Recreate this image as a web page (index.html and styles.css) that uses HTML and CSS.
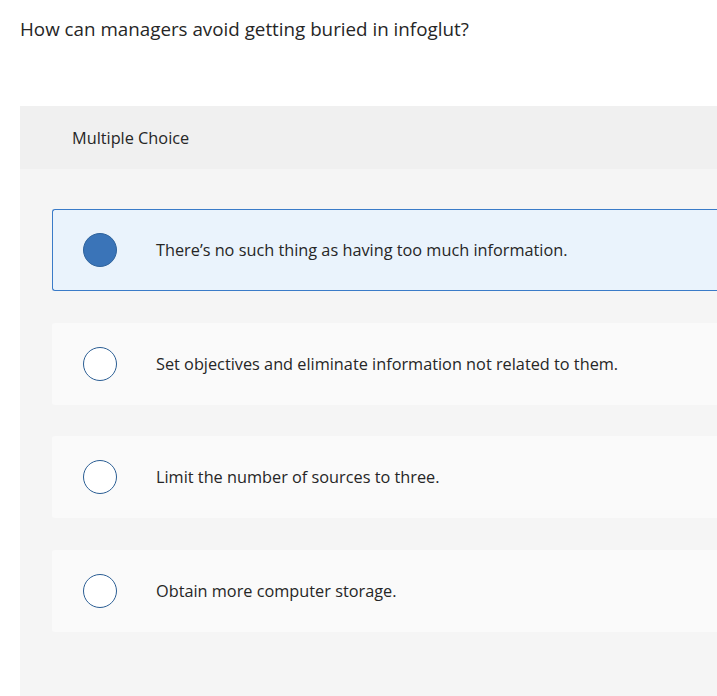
FILE: index.html
```html
<!DOCTYPE html>
<html lang="en">
<head>
    <meta charset="UTF-8">
    <meta name="viewport" content="width=device-width, initial-scale=1.0">
    <title>Multiple Choice</title>
    <link rel="stylesheet" href="styles.css">
</head>
<body>

    <h1 class="question">How can managers avoid getting buried in infoglut?</h1>

    <div class="panel">
        <div class="panel-header">Multiple Choice</div>
        <div class="panel-body">
            <label class="choice selected">
                <span class="radio"></span>
                <span class="choice-text">There’s no such thing as having too much information.</span>
            </label>
            <label class="choice">
                <span class="radio"></span>
                <span class="choice-text">Set objectives and eliminate information not related to them.</span>
            </label>
            <label class="choice">
                <span class="radio"></span>
                <span class="choice-text">Limit the number of sources to three.</span>
            </label>
            <label class="choice">
                <span class="radio"></span>
                <span class="choice-text">Obtain more computer storage.</span>
            </label>
        </div>
    </div>

</body>
</html>
```

FILE: styles.css
```css
html, body {
  overflow: hidden;
}

body {
  margin: 0;
  padding: 0 0 0 20px;
  font-family: "Open Sans", Arial, sans-serif;
  color: #262626;
  background-color: #fff;
}

.question {
  margin: 0;
  padding-top: 16px;
  height: 106px;
  box-sizing: border-box;
  font-size: 18.8px;
  font-weight: 400;
  line-height: 26px;
}

.panel {
  background-color: #f5f5f5;
  padding-bottom: 80px;
}

.panel-header {
  background-color: #f0f0f0;
  height: 63px;
  padding-left: 52px;
  display: flex;
  align-items: center;
  font-size: 16.3px;
}

.panel-body {
  padding: 40px 0 0 32px;
  display: flex;
  flex-direction: column;
  gap: 31.5px;
}

.choice {
  display: flex;
  align-items: center;
  height: 82px;
  box-sizing: border-box;
  background-color: #fafafa;
  border: 1px solid transparent;
  border-right: none;
  border-radius: 3px 0 0 3px;
  padding-left: 30px;
  cursor: pointer;
}

.choice.selected {
  background-color: #eaf3fc;
  border-color: #3a7bc8;
}

.radio {
  width: 34px;
  height: 34px;
  box-sizing: border-box;
  border: 1.5px solid #2b5e94;
  border-radius: 50%;
  background-color: #fff;
  flex-shrink: 0;
}

.choice.selected .radio {
  background-color: #3a74b8;
  border-color: #2f639c;
}

.choice-text {
  margin-left: 39px;
  font-size: 16.3px;
}
```
